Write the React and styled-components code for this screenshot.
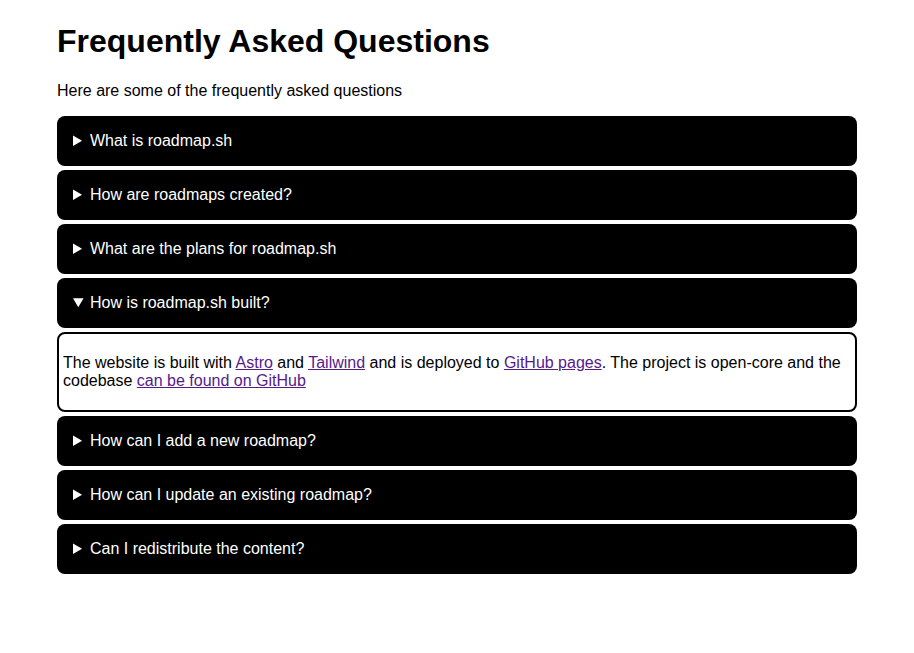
import { useState } from "react";
import styled, { createGlobalStyle } from "styled-components";

const faqs = [
  { q: "What is roadmap.sh", a: "roadmap.sh is a community effort to create roadmaps, guides and other educational content." },
  { q: "How are roadmaps created?", a: "Roadmaps are created by the community and reviewed by the maintainers." },
  { q: "What are the plans for roadmap.sh", a: "We plan to add more roadmaps, guides and interactive content." },
  { q: "How is roadmap.sh built?", built: true },
  { q: "How can I add a new roadmap?", a: "Open an issue on GitHub describing the roadmap you want to add." },
  { q: "How can I update an existing roadmap?", a: "Send a pull request with your changes on GitHub." },
  { q: "Can I redistribute the content?", a: "Please check the license in the repository before redistributing." },
];

const App = () => {
  const [open, setOpen] = useState(3);

  return (
    <>
      <GlobalStyle />
      <Page>
        <Title>Frequently Asked Questions</Title>
        <Intro>Here are some of the frequently asked questions</Intro>

        <List>
          {faqs.map((faq, i) => (
            <Item
              key={faq.q}
              open={open === i}
              onToggle={(e) => {
                if (e.currentTarget.open) setOpen(i);
                else if (open === i) setOpen(null);
              }}
            >
              <Question>{faq.q}</Question>
              <Answer>
                {faq.built ? (
                  <p>
                    The website is built with <a href="#astro">Astro</a> and{" "}
                    <a href="#tailwind">Tailwind</a> and is deployed to{" "}
                    <a href="#pages">GitHub pages</a>. The project is open-core
                    and the codebase <a href="#github">can be found on GitHub</a>
                  </p>
                ) : (
                  <p>{faq.a}</p>
                )}
              </Answer>
            </Item>
          ))}
        </List>
      </Page>
    </>
  );
};

const GlobalStyle = createGlobalStyle`
  body {
    margin: 0;
    background: #ffffff;
    color: #000000;
    font-family: "Liberation Sans", Arial, sans-serif;
  }
`;

const Page = styled.main`
  max-width: 800px;
  margin: 0 auto;
  padding-top: 23px;
`;

const Title = styled.h1`
  font-size: 32px;
  font-weight: 700;
  margin: 0 0 22px;
  line-height: 37px;
`;

const Intro = styled.p`
  font-size: 16px;
  line-height: 18px;
  margin: 0 0 16px;
`;

const List = styled.div`
  display: flex;
  flex-direction: column;
  gap: 4px;
`;

const Item = styled.details`
  margin: 0;
`;

const Question = styled.summary`
  background: #000000;
  color: #ffffff;
  border-radius: 8px;
  padding: 16px;
  font-size: 16px;
  line-height: 18px;
  cursor: pointer;
`;

const Answer = styled.div`
  margin-top: 4px;
  border: 2px solid #000000;
  border-radius: 8px;
  padding: 4px;
  font-size: 16px;
  line-height: 18px;

  p {
    margin: 16px 0;
  }

  a {
    color: #551a8b;
    text-decoration: underline;
  }
`;

export default App;
